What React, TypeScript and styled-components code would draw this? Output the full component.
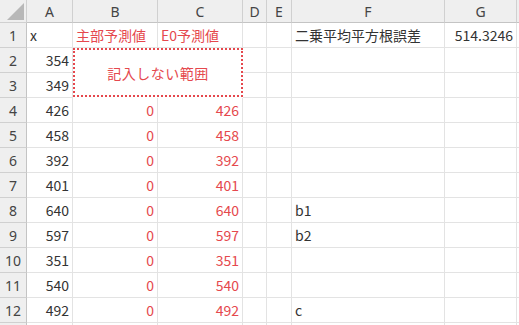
import { createGlobalStyle, styled } from 'styled-components'

const GlobalStyle = createGlobalStyle`
  html, body {
    margin: 0;
    padding: 0;
    background: #ffffff;
  }
  body {
    font-family: 'Noto Sans CJK JP', 'Noto Sans', sans-serif;
  }
`

const red = '#e5484d'
const grid = '#e3e3e3'
const headBorder = '#d0d0d0'

const Sheet = styled.div`
  display: grid;
  grid-template-columns: 27px 46px 85px 85px 24px 25px 153px 72px 1fr;
  grid-template-rows: 23px repeat(13, 25px);
  width: 519px;
  height: 325px;
  overflow: hidden;
  font-size: 14px;
  color: #333333;
`

const Corner = styled.div`
  background: #efefef;
  border-right: 1px solid ${headBorder};
  border-bottom: 1px solid ${headBorder};
  display: flex;
  align-items: flex-end;
  justify-content: flex-end;
  padding: 0 2px 2px 0;
`

const ColHead = styled.div`
  background: #efefef;
  border-right: 1px solid ${headBorder};
  border-bottom: 1px solid #c4c4c4;
  display: flex;
  align-items: center;
  justify-content: center;
  color: #444444;
  font-family: 'Noto Sans', sans-serif;
  font-size: 14px;
`

const RowHead = styled.div`
  background: #efefef;
  border-right: 1px solid #c4c4c4;
  border-bottom: 1px solid ${headBorder};
  display: flex;
  align-items: center;
  justify-content: center;
  color: #444444;
  font-family: 'Noto Sans', sans-serif;
  font-size: 14px;
`

const Cell = styled.div<{ $align?: 'left' | 'right'; $red?: boolean }>`
  border-right: 1px solid ${grid};
  border-bottom: 1px solid ${grid};
  display: flex;
  align-items: center;
  justify-content: ${(p) => (p.$align === 'right' ? 'flex-end' : 'flex-start')};
  padding: 0 3px;
  color: ${(p) => (p.$red ? red : '#333333')};
  white-space: nowrap;
  overflow: visible;
  min-width: 0;
`

const Merged = styled.div`
  grid-column: span 2;
  grid-row: span 2;
  border: 2px dotted ${red};
  display: flex;
  align-items: center;
  justify-content: center;
  color: ${red};
  font-size: 14px;
  letter-spacing: 0.5px;
  margin: 0 0 1px 0;
`

const cols = ['A', 'B', 'C', 'D', 'E', 'F', 'G', '']
const xs = [354, 349, 426, 458, 392, 401, 640, 597, 351, 540, 492]
const fCol: Record<number, string> = { 1: '二乗平均平方根誤差', 8: 'b1', 9: 'b2', 12: 'c' }

export default function App() {
  const rows = []
  for (let r = 1; r <= 13; r++) {
    const cells = []
    cells.push(<RowHead key="h">{r <= 12 ? r : ''}</RowHead>)
    if (r === 1) {
      cells.push(<Cell key="a">x</Cell>)
      cells.push(<Cell key="b" $red>主部予測値</Cell>)
      cells.push(<Cell key="c" $red>E0予測値</Cell>)
    } else if (r <= 12) {
      const v = xs[r - 2]
      cells.push(<Cell key="a" $align="right">{v}</Cell>)
      if (r === 2) {
        cells.push(<Merged key="m">記入しない範囲</Merged>)
      } else if (r > 3) {
        cells.push(<Cell key="b" $align="right" $red>0</Cell>)
        cells.push(<Cell key="c" $align="right" $red>{v}</Cell>)
      }
    } else {
      cells.push(<Cell key="a" />, <Cell key="b" />, <Cell key="c" />)
    }
    cells.push(<Cell key="d" />, <Cell key="e" />)
    cells.push(<Cell key="f">{fCol[r] ?? ''}</Cell>)
    cells.push(<Cell key="g" $align="right">{r === 1 ? '514.3246' : ''}</Cell>)
    cells.push(<Cell key="x" />)
    rows.push(...cells.map((c, i) => ({ ...c, key: `${r}-${i}` })))
  }

  return (
    <>
      <GlobalStyle />
      <Sheet>
        <Corner>
          <svg width="17" height="17" viewBox="0 0 17 17">
            <polygon points="17,0 17,17 0,17" fill="#b8b8b8" />
          </svg>
        </Corner>
        {cols.map((c, i) => (
          <ColHead key={i}>{c}</ColHead>
        ))}
        {rows}
      </Sheet>
    </>
  )
}
